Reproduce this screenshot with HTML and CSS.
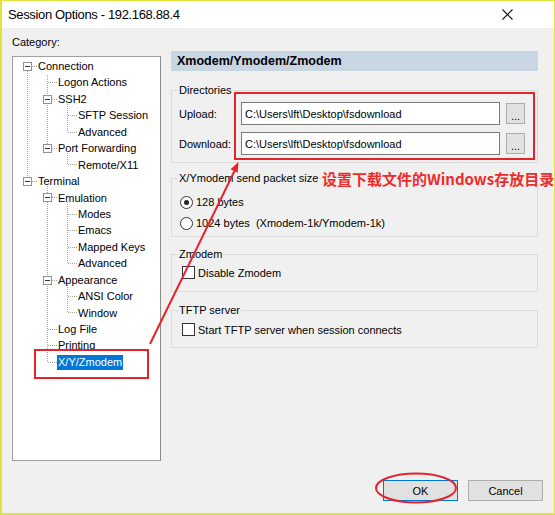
FILE: index.html
```html
<!DOCTYPE html>
<html>
<head>
<meta charset="utf-8">
<title>Session Options</title>
<link rel="stylesheet" href="styles.css">
</head>
<body>
<div class="window">
  <div class="titlebar">
    <span class="title">Session Options - 192.168.88.4</span>
    <svg class="close" width="11" height="11" viewBox="0 0 11 11"><path d="M0.5 0.5L10.5 10.5M10.5 0.5L0.5 10.5" stroke="#111" stroke-width="1.1" fill="none"/></svg>
  </div>
  <div class="content">
    <div class="main">
      <div class="leftcol">
        <div class="cat-label">Category:</div>
        <div class="tree">
          <svg class="tree-lines" width="147" height="403" viewBox="0 0 147 403">
            <g stroke="#a3a3a3" stroke-width="1" stroke-dasharray="1 1" fill="none">
              <path d="M14.5 14V120M19 9.5H24M19 124.5H24"/>
              <path d="M34.5 18V91.5M35 25.5H44M39 42.5H44M39 91.5H44"/>
              <path d="M54.5 47V75.5M55 58.5H64M55 75.5H64"/>
              <path d="M54.5 96V107.5M55 107.5H64"/>
              <path d="M34.5 129V305.5M39 140.5H44M39 223.5H44M35 272.5H44M35 288.5H44M35 305.5H44"/>
              <path d="M54.5 145V206.5M55 157.5H64M55 173.5H64M55 190.5H64M55 206.5H64"/>
              <path d="M54.5 228V255.5M55 239.5H64M55 255.5H64"/>
            </g>
            <g stroke="#919191" fill="#fff">
              <rect x="10.5" y="5.5" width="8" height="8"/>
              <rect x="10.5" y="120.5" width="8" height="8"/>
              <rect x="30.5" y="38.5" width="8" height="8"/>
              <rect x="30.5" y="87.5" width="8" height="8"/>
              <rect x="30.5" y="136.5" width="8" height="8"/>
              <rect x="30.5" y="219.5" width="8" height="8"/>
            </g>
            <g stroke="#333" fill="none">
              <path d="M12 9.5H17M12 124.5H17M32 42.5H37M32 91.5H37M32 140.5H37M32 223.5H37"/>
            </g>
          </svg>
          <div class="row l0">Connection</div>
          <div class="row l1">Logon Actions</div>
          <div class="row l1">SSH2</div>
          <div class="row l2">SFTP Session</div>
          <div class="row l2">Advanced</div>
          <div class="row l1">Port Forwarding</div>
          <div class="row l2">Remote/X11</div>
          <div class="row l0">Terminal</div>
          <div class="row l1">Emulation</div>
          <div class="row l2">Modes</div>
          <div class="row l2">Emacs</div>
          <div class="row l2">Mapped Keys</div>
          <div class="row l2">Advanced</div>
          <div class="row l1">Appearance</div>
          <div class="row l2">ANSI Color</div>
          <div class="row l2">Window</div>
          <div class="row l1">Log File</div>
          <div class="row l1">Printing</div>
          <div class="row l1"><span class="selected">X/Y/Zmodem</span></div>
        </div>
      </div>
      <div class="rightcol">
        <div class="panel-title">Xmodem/Ymodem/Zmodem</div>
        <fieldset class="group dirs">
          <legend>Directories</legend>
          <div class="dir-row">
            <span class="dir-label">Upload:</span>
            <input class="path" type="text" readonly value="C:\Users\lft\Desktop\fsdownload">
            <button class="browse"><span>...</span></button>
          </div>
          <div class="dir-row">
            <span class="dir-label">Download:</span>
            <input class="path" type="text" readonly value="C:\Users\lft\Desktop\fsdownload">
            <button class="browse"><span>...</span></button>
          </div>
        </fieldset>
        <fieldset class="group packet">
          <legend>X/Ymodem send packet size</legend>
          <div class="opt"><span class="radio on"></span><span>128 bytes</span></div>
          <div class="opt second"><span class="radio"></span><span>1024 bytes&nbsp;&nbsp;(Xmodem-1k/Ymodem-1k)</span></div>
        </fieldset>
        <fieldset class="group zm">
          <legend>Zmodem</legend>
          <div class="chk-row"><span class="check"></span><span>Disable Zmodem</span></div>
        </fieldset>
        <fieldset class="group tftp">
          <legend>TFTP server</legend>
          <div class="chk-row"><span class="check"></span><span>Start TFTP server when session connects</span></div>
        </fieldset>
      </div>
    </div>
    <div class="buttons">
      <button class="btn default">OK</button>
      <button class="btn">Cancel</button>
    </div>
  </div>
</div>
<div class="annot-text">设置下载文件的Windows存放目录</div>
<svg class="annot" width="555" height="515" viewBox="0 0 555 515">
  <g stroke="#e3242b" fill="none" stroke-width="2">
    <rect x="235" y="93" width="299" height="66"/>
    <rect x="35" y="350" width="113" height="28"/>
    <path d="M150 344L235 170"/>
    <ellipse cx="416" cy="488" rx="40" ry="14.5"/>
  </g>
  <path d="M238.5 162L237.7 172.7L230.5 169.3Z" fill="#e3242b"/>
</svg>
</body>
</html>
```

FILE: styles.css
```css
* {
  box-sizing: border-box;
}

body {
  margin: 0;
  position: relative;
  width: 555px;
  height: 515px;
  overflow: hidden;
  font-family: "Liberation Sans", Arial, sans-serif;
  font-size: 11px;
  color: #000;
  background: #fff;
}

.window {
  width: 555px;
  height: 515px;
  border: 1px solid #e2e23c;
  border-left-width: 2px;
  border-bottom-width: 2px;
  display: flex;
  flex-direction: column;
  background: #f0f0f0;
}

.titlebar {
  height: 27px;
  flex: none;
  background: #fff;
  display: flex;
  align-items: center;
  justify-content: space-between;
  padding: 0 41px 0 6px;
}

.title {
  font-size: 13px;
  letter-spacing: -0.35px;
}

.close {
  display: block;
}

.content {
  flex: 1;
  display: flex;
  flex-direction: column;
}

.main {
  display: flex;
  align-items: flex-start;
  gap: 10px;
  padding-left: 10px;
}

.leftcol {
  width: 149px;
  padding-top: 6px;
}

.cat-label {
  height: 16px;
  line-height: 16px;
}

.tree {
  position: relative;
  margin-top: 6px;
  height: 405px;
  background: #fff;
  border: 1px solid #a0a0a0;
  border-right-color: #8c8c8c;
  padding-top: 1px;
}

.tree-lines {
  position: absolute;
  left: 0;
  top: 0;
}

.row {
  position: relative;
  height: 16.45px;
  line-height: 16.45px;
  white-space: nowrap;
}

.l0 {
  padding-left: 25px;
}

.l1 {
  padding-left: 45px;
}

.l2 {
  padding-left: 65px;
}

.selected {
  display: inline-block;
  background: #0078d7;
  color: #fff;
  line-height: 15px;
  padding: 0 1px;
  margin-left: -1px;
}

.rightcol {
  width: 367px;
  padding-top: 23px;
}

.panel-title {
  height: 20px;
  line-height: 20px;
  background: #c8d5e2;
  padding-left: 6px;
  font-weight: bold;
  font-size: 12.5px;
}

.group {
  margin: 0;
  min-width: 0;
  border: 1px solid #dcdcdc;
  padding: 0 12px 7px 7px;
}

.group legend {
  padding: 0 1px;
  margin-left: -1px;
  line-height: 14px;
}

.dirs {
  margin-top: 12px;
  padding-top: 5px;
  padding-bottom: 7px;
}

.dir-row {
  display: flex;
  align-items: center;
  height: 23px;
}

.dir-row + .dir-row {
  margin-top: 7px;
}

.dir-label {
  width: 62px;
}

.path {
  width: 259px;
  height: 23px;
  margin: 0;
  border: 1px solid #7a7a7a;
  background: #fff;
  padding: 0 3px;
  font-family: "Liberation Sans", Arial, sans-serif;
  font-size: 11px;
  color: #000;
  outline: none;
}

.browse {
  width: 19px;
  height: 21px;
  margin: 0 0 0 6px;
  padding: 0 0 3px 0;
  border: 1px solid #adadad;
  background: #e1e1e1;
  display: flex;
  align-items: flex-end;
  justify-content: center;
  font-family: "Liberation Sans", Arial, sans-serif;
  font-size: 11px;
  line-height: 8px;
  color: #000;
}

.packet {
  margin-top: 8px;
  padding-top: 9px;
  padding-bottom: 5px;
}

.opt {
  display: flex;
  align-items: center;
  gap: 3px;
  height: 16px;
  margin-left: 1px;
}

.opt.second {
  margin-top: 5px;
}

.radio {
  width: 13px;
  height: 13px;
  border: 1px solid #333;
  border-radius: 50%;
  background: #fff;
  display: flex;
  align-items: center;
  justify-content: center;
}

.radio.on::after {
  content: "";
  width: 5px;
  height: 5px;
  border-radius: 50%;
  background: #222;
}

.zm {
  margin-top: 10px;
  padding-top: 5px;
  padding-bottom: 12px;
}

.tftp {
  margin-top: 11px;
  padding-top: 6px;
  padding-bottom: 11px;
}

.chk-row {
  display: flex;
  align-items: center;
  gap: 3px;
  height: 13px;
  margin-left: 3px;
}

.check {
  width: 13px;
  height: 13px;
  border: 1px solid #333;
  background: #fff;
}

.buttons {
  display: flex;
  justify-content: flex-end;
  gap: 10px;
  padding-right: 11px;
  margin-top: 19px;
}

.btn {
  width: 75px;
  height: 21px;
  margin: 0;
  padding: 0;
  border: 1px solid #adadad;
  background: #e1e1e1;
  font-family: "Liberation Sans", Arial, sans-serif;
  font-size: 11px;
  color: #000;
}

.btn.default {
  border-color: #0078d7;
}

.annot-text {
  position: absolute;
  left: 322px;
  top: 170px;
  font-family: "Noto Sans CJK SC", "Noto Sans", sans-serif;
  font-weight: bold;
  font-size: 15px;
  line-height: 17px;
  color: #ee2b2b;
  background: #f0f0f0;
  white-space: nowrap;
}

.annot {
  position: absolute;
  left: 0;
  top: 0;
  pointer-events: none;
}
```
